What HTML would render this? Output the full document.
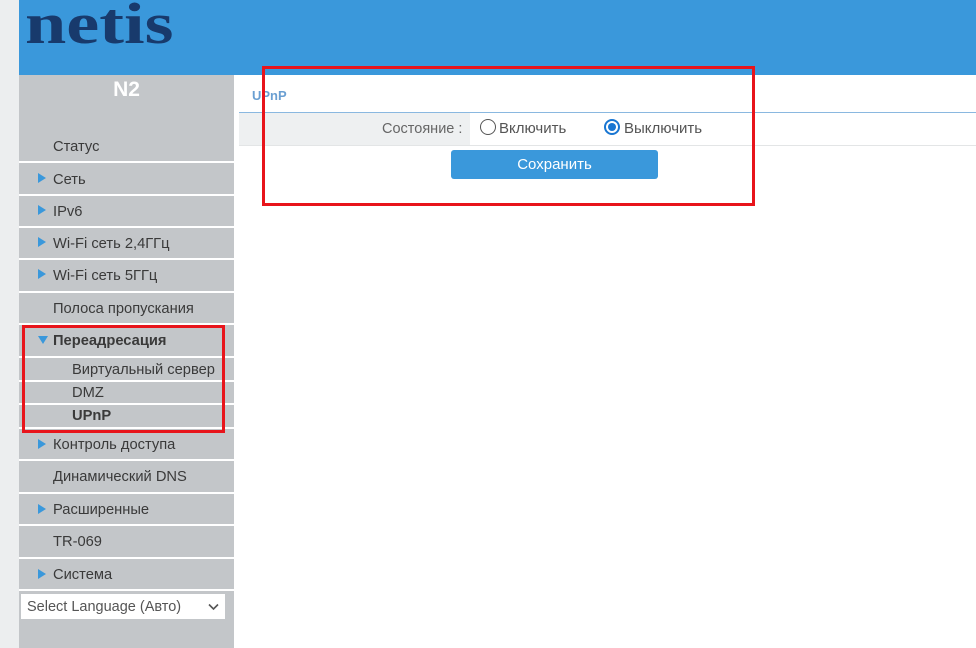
<!DOCTYPE html>
<html><head><meta charset="utf-8"><style>
*{margin:0;padding:0;box-sizing:border-box}
body{width:976px;height:648px;position:relative;background:#fff;font-family:"Liberation Sans",Arial,sans-serif;overflow:hidden}
.a{position:absolute}
.it{position:absolute;left:19px;width:215px;font-size:14.7px;color:#3a3a3a;padding-left:34px;line-height:18px;white-space:nowrap}
.sep{position:absolute;left:19px;width:215px;height:2px;background:#fff}
.tri{position:absolute;left:19px;width:0;height:0;border-top:5px solid transparent;border-bottom:5px solid transparent;border-left:8px solid #3a98db}
</style></head><body>
<div class="a" style="left:0;top:0;width:19px;height:648px;background:#eceeef"></div>
<div class="a" style="left:19px;top:0;width:957px;height:75px;background:#3a98db"></div>
<div class="a" style="left:25px;top:-5px;font-family:'Liberation Serif',serif;font-weight:bold;font-size:58px;line-height:1;color:#183a6c;transform:scaleX(1.28);transform-origin:left top">netis</div>
<div class="a" style="left:19px;top:75px;width:215px;height:573px;background:#c3c6c9"></div>
<div class="a" style="left:19px;top:78px;width:215px;text-align:center;color:#fff;font-weight:bold;font-size:21px">N2</div>

<div class="it" style="top:138px">Статус</div><div class="sep" style="top:161px"></div>
<div class="tri" style="top:173px;left:38px"></div><div class="it" style="top:171px">Сеть</div><div class="sep" style="top:194px"></div>
<div class="tri" style="top:205px;left:38px"></div><div class="it" style="top:203px">IPv6</div><div class="sep" style="top:226px"></div>
<div class="tri" style="top:237px;left:38px"></div><div class="it" style="top:235px">Wi-Fi сеть 2,4ГГц</div><div class="sep" style="top:258px"></div>
<div class="tri" style="top:269px;left:38px"></div><div class="it" style="top:267px">Wi-Fi сеть 5ГГц</div><div class="sep" style="top:291px"></div>
<div class="it" style="top:300px">Полоса пропускания</div><div class="sep" style="top:323px"></div>
<div class="a" style="left:38px;top:336px;border-left:5px solid transparent;border-right:5px solid transparent;border-top:8px solid #3a98db"></div>
<div class="it" style="top:332px;font-weight:bold">Переадресация</div><div class="sep" style="top:356px"></div>
<div class="it" style="top:361px;padding-left:53px">Виртуальный сервер</div><div class="sep" style="top:380px"></div>
<div class="it" style="top:384px;padding-left:53px">DMZ</div><div class="sep" style="top:403px"></div>
<div class="it" style="top:407px;padding-left:53px;font-weight:bold">UPnP</div><div class="sep" style="top:427px"></div>
<div class="tri" style="top:439px;left:38px"></div><div class="it" style="top:436px">Контроль доступа</div><div class="sep" style="top:459px"></div>
<div class="it" style="top:468px">Динамический DNS</div><div class="sep" style="top:492px"></div>
<div class="tri" style="top:504px;left:38px"></div><div class="it" style="top:501px">Расширенные</div><div class="sep" style="top:524px"></div>
<div class="it" style="top:533px">TR-069</div><div class="sep" style="top:557px"></div>
<div class="tri" style="top:569px;left:38px"></div><div class="it" style="top:566px">Система</div><div class="sep" style="top:589px"></div>
<div class="a" style="left:21px;top:594px;width:204px;height:25px;background:#fff;font-size:14.5px;color:#555;padding:5px 6px;white-space:nowrap">Select Language (Авто)
<svg style="position:absolute;right:6px;top:9px" width="11" height="8" viewBox="0 0 11 8"><path d="M1 1.5 L5.5 6 L10 1.5" fill="none" stroke="#555" stroke-width="1.6"/></svg></div>

<div class="a" style="left:252px;top:88px;font-size:13px;font-weight:bold;color:#6a9fd2">UPnP</div>
<div class="a" style="left:239px;top:112px;width:737px;height:1px;background:#8ab8e0"></div>
<div class="a" style="left:239px;top:113px;width:231px;height:32px;background:#eef0f1"></div>
<div class="a" style="left:239px;top:145px;width:737px;height:1px;background:#e3e5e6"></div>
<div class="a" style="left:382px;top:121px;font-size:14.5px;color:#666">Состояние :</div>
<div class="a" style="left:480px;top:119px;width:16px;height:16px;border:1px solid #555;border-radius:50%;background:#fff"></div>
<div class="a" style="left:499px;top:120px;font-size:15px;color:#555">Включить</div>
<div class="a" style="left:604px;top:119px;width:16px;height:16px;border:2px solid #1976d2;border-radius:50%;background:#fff"></div>
<div class="a" style="left:608px;top:123px;width:8px;height:8px;border-radius:50%;background:#1976d2"></div>
<div class="a" style="left:624px;top:120px;font-size:15px;color:#555">Выключить</div>
<div class="a" style="left:451px;top:150px;width:207px;height:29px;background:#3a98db;border-radius:3px;color:#fff;font-size:15px;text-align:center;line-height:30px">Сохранить</div>

<div class="a" style="left:262px;top:66px;width:493px;height:140px;border:3px solid #e8141b"></div>
<div class="a" style="left:22px;top:325px;width:203px;height:108px;border:3px solid #e8141b"></div>
</body></html>
